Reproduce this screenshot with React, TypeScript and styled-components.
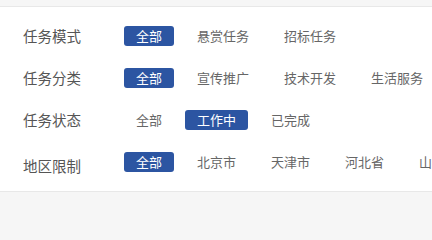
import React from "react";
import styled, { createGlobalStyle } from "styled-components";

const GlobalStyle = createGlobalStyle`
    html, body {
        margin: 0;
        padding: 0;
        background: #f6f6f6;
        overflow: hidden;
    }
    body {
        font-family: "Noto Sans CJK SC", "Noto Sans", sans-serif;
    }
`;

const FilterPanel = styled.section`
    margin-top: 6px;
    width: 640px;
    background: #fff;
    border-top: 1px solid #e8e8e8;
    border-bottom: 1px solid #e8e8e8;
    padding: 19px 0 19px;
    display: flex;
    flex-direction: column;
    gap: 22px;
`;

const FilterRow = styled.div`
    display: flex;
    align-items: center;
    height: 20px;
`;

// $drop: how far the label sits below the row's centre line
const RowLabel = styled.div<{ $drop?: number }>`
    flex: 0 0 auto;
    width: 124px;
    box-sizing: border-box;
    padding-left: 23px;
    margin-top: ${(p) => (p.$drop ? p.$drop * 2 : 0)}px;
    font-size: 14.5px;
    color: #555;
    line-height: 20px;
    white-space: nowrap;
`;

const OptionList = styled.div`
    display: flex;
    gap: 11px;
    white-space: nowrap;
`;

const Option = styled.span<{ $active?: boolean }>`
    display: inline-block;
    height: 20px;
    line-height: 20px;
    padding: 0 12px;
    border-radius: 3px;
    font-size: 13px;
    color: ${(p) => (p.$active ? "#fff" : "#666")};
    background: ${(p) => (p.$active ? "#2c55a2" : "transparent")};
    cursor: pointer;
`;

const filters = [
    { label: "任务模式", options: ["全部", "悬赏任务", "招标任务"], active: 0 },
    { label: "任务分类", options: ["全部", "宣传推广", "技术开发", "生活服务"], active: 0 },
    { label: "任务状态", options: ["全部", "工作中", "已完成"], active: 1 },
    { label: "地区限制", options: ["全部", "北京市", "天津市", "河北省", "山西省"], active: 0, drop: 4 },
];

function App() {
    return (
        <>
            <GlobalStyle />
            <FilterPanel>
                {filters.map((f) => (
                    <FilterRow key={f.label}>
                        <RowLabel $drop={f.drop}>{f.label}</RowLabel>
                        <OptionList>
                            {f.options.map((o, i) => (
                                <Option key={o} $active={i === f.active}>{o}</Option>
                            ))}
                        </OptionList>
                    </FilterRow>
                ))}
            </FilterPanel>
        </>
    );
}

export default App;
